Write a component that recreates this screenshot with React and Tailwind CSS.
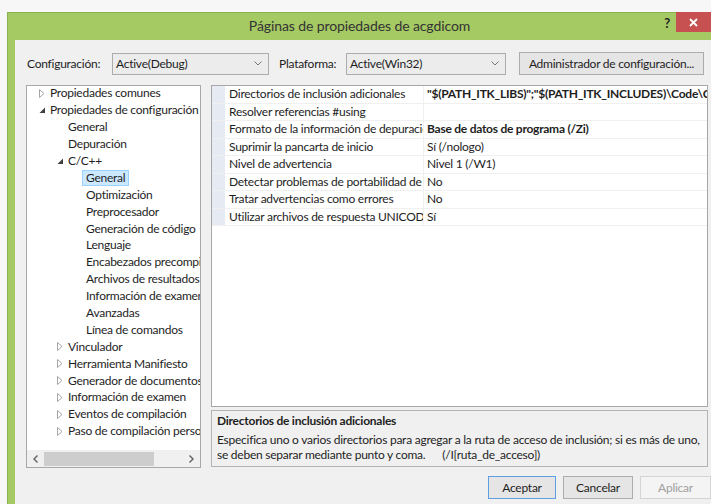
import React from "react";

const tree = [
  { t: "Propiedades comunes", lvl: 0, arrow: "closed" },
  { t: "Propiedades de configuración", lvl: 0, arrow: "open" },
  { t: "General", lvl: 1 },
  { t: "Depuración", lvl: 1 },
  { t: "C/C++", lvl: 1, arrow: "open" },
  { t: "General", lvl: 2, selected: true },
  { t: "Optimización", lvl: 2 },
  { t: "Preprocesador", lvl: 2 },
  { t: "Generación de código", lvl: 2 },
  { t: "Lenguaje", lvl: 2 },
  { t: "Encabezados precompilados", lvl: 2 },
  { t: "Archivos de resultados", lvl: 2 },
  { t: "Información de examen", lvl: 2 },
  { t: "Avanzadas", lvl: 2 },
  { t: "Línea de comandos", lvl: 2 },
  { t: "Vinculador", lvl: 1, arrow: "closed" },
  { t: "Herramienta Manifiesto", lvl: 1, arrow: "closed" },
  { t: "Generador de documentos XML", lvl: 1, arrow: "closed" },
  { t: "Información de examen", lvl: 1, arrow: "closed" },
  { t: "Eventos de compilación", lvl: 1, arrow: "closed" },
  { t: "Paso de compilación personalizado", lvl: 1, arrow: "closed" },
];

const props = [
  {
    n: "Directorios de inclusión adicionales",
    v: '"$(PATH_ITK_LIBS)";"$(PATH_ITK_INCLUDES)\\Code\\Common";"$(PATH_ITK_INCLUDES)\\Code\\IO"',
    bold: true,
  },
  { n: "Resolver referencias #using", v: "" },
  { n: "Formato de la información de depuración", v: "Base de datos de programa (/Zi)", bold: true },
  { n: "Suprimir la pancarta de inicio", v: "Sí (/nologo)" },
  { n: "Nivel de advertencia", v: "Nivel 1 (/W1)" },
  { n: "Detectar problemas de portabilidad de 64 bits", v: "No" },
  { n: "Tratar advertencias como errores", v: "No" },
  { n: "Utilizar archivos de respuesta UNICODE", v: "Sí" },
];

const indent = ["pl-[7px]", "pl-[25px]", "pl-[43px]"];

function Arrow({ kind }) {
  if (kind === "closed") {
    return (
      <svg width="6" height="9" viewBox="0 0 6 9">
        <path d="M0.5 0.5 L5 4.5 L0.5 8.5 Z" fill="none" stroke="#a6a6a6" strokeWidth="1" />
      </svg>
    );
  }
  if (kind === "open") {
    return (
      <svg width="7" height="7" viewBox="0 0 7 7">
        <path d="M6 0.5 L6 6 L0.5 6 Z" fill="#404040" />
      </svg>
    );
  }
  return null;
}

function Combo({ value, w }) {
  return (
    <div
      className={`${w} h-[22px] flex items-center justify-between border border-[#acacac] bg-[#ececec] pl-[3px] pr-[6px]`}
    >
      <span>{value}</span>
      <svg width="8" height="5" viewBox="0 0 8 5">
        <path d="M0.5 0.5 L4 4 L7.5 0.5" fill="none" stroke="#777" strokeWidth="1" />
      </svg>
    </div>
  );
}

export default function App() {
  return (
    <div className="w-[711px] h-[504px] overflow-hidden bg-[#f7f7f7] pt-[12px] pl-[7px] font-['Lato','Liberation_Sans',sans-serif] text-[12px] tracking-[-0.25px] text-[#1e1e1e] leading-none">
      <div className="h-full flex flex-col bg-[#a5c963] border-l border-t border-[#8fb04f]">
        {/* title bar */}
        <div className="relative h-[27px] flex items-center justify-center">
          <span className="text-[14px] tracking-[-0.1px] text-[#333] pb-[2px]">Páginas de propiedades de acgdicom</span>
          <span className="absolute right-[41px] top-[4px] text-[13px] font-bold text-[#222]">?</span>
          <div className="absolute right-0 top-[-1px] w-[35px] h-[20px] bg-[#c75050] flex items-center justify-center">
            <svg width="9" height="9" viewBox="0 0 9 9">
              <path d="M1 1 L8 8 M8 1 L1 8" stroke="#fff" strokeWidth="1.8" />
            </svg>
          </div>
        </div>

        {/* dialog body */}
        <div className="flex-1 ml-[7px] bg-[#f0f0f0] flex flex-col overflow-hidden">
          <div className="flex items-center mt-[12px] pl-[12px] h-[23px]">
            <span className="w-[85px]">Configuración:</span>
            <Combo value="Active(Debug)" w="w-[157px]" />
            <span className="w-[67px] ml-[10px]">Plataforma:</span>
            <Combo value="Active(Win32)" w="w-[160px]" />
            <div className="ml-[13px] w-[185px] h-[23px] border border-[#acacac] bg-[#e5e5e5] flex items-center justify-center">
              Administrador de configuración...
            </div>
          </div>

          <div className="flex mt-[10px] pl-[11px] gap-[10px]">
            {/* category tree */}
            <div className="w-[175px] h-[383px] border border-[#a8a8a8] bg-white flex flex-col">
              <div className="flex-1 overflow-hidden -mt-[1px]">
                {tree.map((it, i) => (
                  <div key={i} className={`h-[16.9px] flex items-center whitespace-nowrap ${indent[it.lvl]}`}>
                    <span className="w-[16px] flex items-center justify-center shrink-0">
                      <Arrow kind={it.arrow} />
                    </span>
                    <span
                      className={
                        it.selected
                          ? "ml-[-4px] px-[3px] h-[16px] flex items-center border border-[#99d1ff] bg-[#cce8ff]"
                          : ""
                      }
                    >
                      {it.t}
                    </span>
                  </div>
                ))}
              </div>
              <div className="h-[17px] flex items-center bg-[#f0f0f0]">
                <span className="w-[17px] flex justify-center">
                  <svg width="5" height="8" viewBox="0 0 5 8">
                    <path d="M4.5 0.5 L1 4 L4.5 7.5" fill="none" stroke="#606060" strokeWidth="1.4" />
                  </svg>
                </span>
                <div className="w-[110px] h-[14px] bg-[#cdcdcd]" />
                <span className="ml-auto w-[17px] flex justify-center">
                  <svg width="5" height="8" viewBox="0 0 5 8">
                    <path d="M0.5 0.5 L4 4 L0.5 7.5" fill="none" stroke="#606060" strokeWidth="1.4" />
                  </svg>
                </span>
              </div>
            </div>

            {/* property grid and description */}
            <div className="w-[497px] flex flex-col gap-[3px]">
              <div className="h-[322px] border border-[#a8a8a8] bg-white">
                {props.map((p, i) => (
                  <div key={i} className="h-[17.5px] flex border-b border-[#f0f0f0]">
                    <div className="w-[13px] bg-[#e6eaf3] shrink-0" />
                    <div className="w-[199px] shrink-0 flex items-center pl-[4px] overflow-hidden whitespace-nowrap border-r border-[#f0f0f0]">
                      {p.n}
                    </div>
                    <div
                      className={`flex-1 flex items-center pl-[3px] overflow-hidden whitespace-nowrap ${
                        p.bold ? "font-bold" : ""
                      }`}
                    >
                      {p.v}
                    </div>
                  </div>
                ))}
              </div>
              <div className="h-[57px] border border-[#b4b4b4] bg-[#f0f0f0] pl-[5px] pt-[4px] whitespace-nowrap">
                <div className="font-bold h-[14px]">Directorios de inclusión adicionales</div>
                <div className="mt-[3px] leading-[15px]">
                  <div>
                    Especifica uno o varios directorios para agregar a la ruta de acceso de inclusión; si es más de uno,
                  </div>
                  <div>
                    se deben separar mediante punto y coma.{"\u00a0\u00a0\u00a0\u00a0\u00a0\u00a0"}(/I[ruta_de_acceso])
                  </div>
                </div>
              </div>
            </div>
          </div>

          <div className="flex mt-[8px] pl-[473px] gap-[7px]">
            <div className="w-[68px] h-[23px] border border-[#5e9fe3] bg-[#e5e5e5] flex items-center justify-center">
              Aceptar
            </div>
            <div className="w-[70px] h-[23px] border border-[#adadad] bg-[#e5e5e5] flex items-center justify-center">
              Cancelar
            </div>
            <div className="w-[71px] h-[23px] border border-[#d4d4d4] bg-[#f4f4f4] text-[#a0a0a0] flex items-center justify-center">
              Aplicar
            </div>
          </div>
        </div>
      </div>
    </div>
  );
}
